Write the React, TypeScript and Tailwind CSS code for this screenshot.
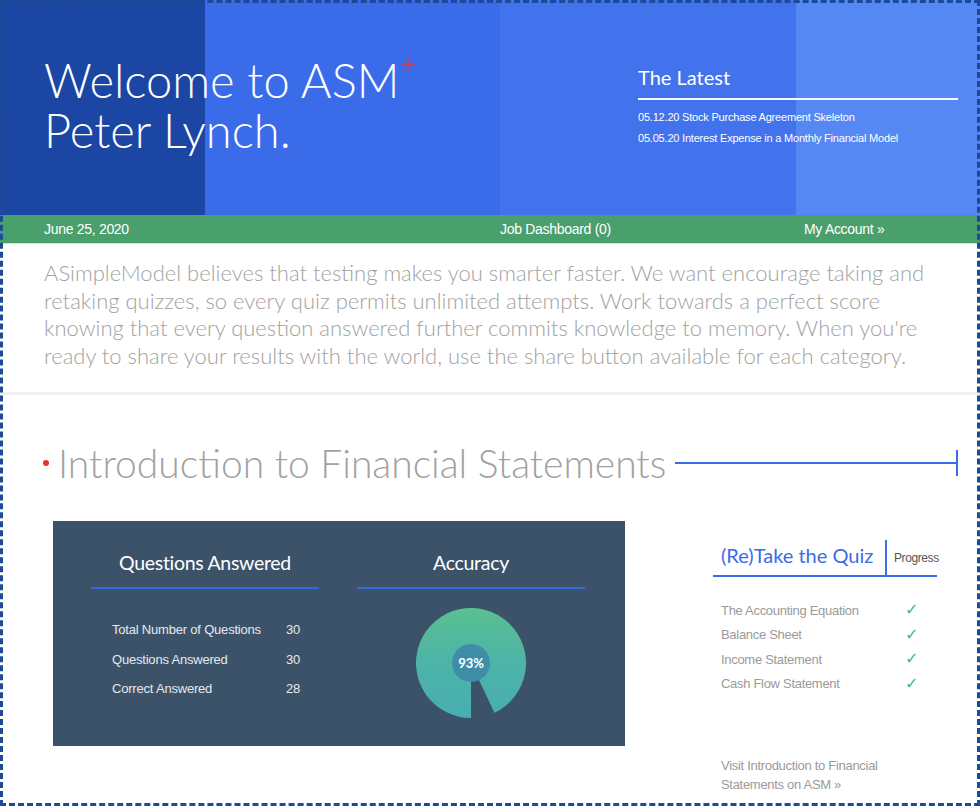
import React from "react";

const thin = "font-['Lato','Noto_Sans',sans-serif]";
const narrow = "font-['Liberation_Sans',Arial,sans-serif]";

const latest = [
  "05.12.20 Stock Purchase Agreement Skeleton",
  "05.05.20 Interest Expense in a Monthly Financial Model",
];

const stats = [
  { label: "Total Number of Questions", value: 30 },
  { label: "Questions Answered", value: 30 },
  { label: "Correct Answered", value: 28 },
];

const modules = ["The Accounting Equation", "Balance Sheet", "Income Statement", "Cash Flow Statement"];

function AccuracyDonut({ pct }: { pct: number }) {
  // arc starts at 6 o'clock and runs clockwise
  const r = 55;
  const c = 55;
  const start = Math.PI;
  const end = start + (pct / 100) * Math.PI * 2;
  const sx = c + r * Math.sin(start);
  const sy = c - r * Math.cos(start);
  const ex = c + r * Math.sin(end);
  const ey = c - r * Math.cos(end);
  const large = pct > 50 ? 1 : 0;
  return (
    <svg width="110" height="110" viewBox="0 0 110 110">
      <defs>
        <linearGradient id="acc" x1="0" y1="0" x2="0" y2="1">
          <stop offset="0" stopColor="#59c08f" />
          <stop offset="0.45" stopColor="#4db5a6" />
          <stop offset="1" stopColor="#47adb4" />
        </linearGradient>
      </defs>
      <path d={`M${c} ${c} L${sx} ${sy} A${r} ${r} 0 ${large} 1 ${ex} ${ey} Z`} fill="url(#acc)" />
      <circle cx={c} cy={c} r="19" fill="#3f8ea9" />
      <text
        x={c}
        y={c + 4.5}
        textAnchor="middle"
        fill="#ffffff"
        fontSize="13"
        fontWeight="700"
        fontFamily="Lato, sans-serif"
      >
        {pct}%
      </text>
    </svg>
  );
}

export default function App() {
  return (
    <div className="relative h-[806px] w-[980px] overflow-hidden bg-white">
      {/* header */}
      <header className="flex h-[215px] bg-[linear-gradient(90deg,#1c46a3_0px,#1c46a3_205px,#3a6be8_205px,#3a6be8_500px,#4273ec_500px,#4273ec_796px,#5688f3_796px)] text-white">
        <div className="w-[638px] shrink-0 pl-[44px] pt-[55px]">
          <h1 className={`${thin} text-[47px] font-light leading-[50px]`}>
            <span className="block">
              Welcome to ASM
              <svg className="relative -top-[22px] ml-[3px] inline-block" width="14" height="14" viewBox="0 0 14 14">
                <path d="M7 0V14M0 7H14" stroke="#d8404c" strokeWidth="1.6" />
              </svg>
            </span>
            <span className="block">Peter Lynch.</span>
          </h1>
        </div>
        <div className="w-[320px] pt-[65px]">
          <h2 className={`${thin} text-[20px] leading-[24px] font-normal`}>The Latest</h2>
          <div className="mt-[9px] h-[2px] bg-white" />
          <ul className={`${narrow} mt-[7px] text-[11px] leading-[21px] tracking-[-0.2px]`}>
            {latest.map((item) => (
              <li key={item}>{item}</li>
            ))}
          </ul>
        </div>
      </header>

      {/* status bar */}
      <nav
        className={`${narrow} grid h-[29px] grid-cols-[456px_304px_1fr] items-center border-b border-[#cfe7d8] bg-[#4aa06d] pl-[44px] text-[14px] tracking-[-0.3px] text-white`}
      >
        <span>June 25, 2020</span>
        <span>Job Dashboard (0)</span>
        <span>My Account »</span>
      </nav>

      <p className={`${thin} pl-[44px] pr-[36px] pt-[15px] text-[22px] font-light leading-[27.5px] text-[#a2a2a2]`}>
        ASimpleModel believes that testing makes you smarter faster. We want encourage taking and retaking quizzes, so
        every quiz permits unlimited attempts. Work towards a perfect score knowing that every question answered further
        commits knowledge to memory. When you're ready to share your results with the world, use the share button
        available for each category.
      </p>

      <div className="mt-[23px] h-[3px] bg-[#efefef]" />

      {/* section title */}
      <div className="mt-[46px] flex items-center pl-[43px] pr-[22px]">
        <span className="mr-[9px] h-[6px] w-[6px] rounded-full bg-[#e8322f]" />
        <h2 className={`${thin} text-[39px] font-light leading-[44px] text-[#a0a2a3]`}>
          Introduction to Financial Statements
        </h2>
        <div className="ml-[9px] flex flex-1 items-center">
          <div className="h-[2px] flex-1 bg-[#3a6be8]" />
          <div className="h-[26px] w-[2px] bg-[#3a6be8]" />
        </div>
      </div>

      <div className="mt-[36px] flex pl-[53px]">
        {/* results card */}
        <section className="flex h-[225px] w-[572px] shrink-0 gap-[38px] bg-[#3c5269] pl-[38px] pt-[30px]">
          <div className="w-[228px]">
            <h3 className={`${thin} text-center text-[19.5px] leading-[24px] font-normal tracking-[-0.3px] text-white`}>
              Questions Answered
            </h3>
            <div className="mt-[12px] h-[2px] bg-[#3468e0]" />
            <dl className={`${narrow} mt-[26px] pl-[21px] text-[13px] tracking-[-0.2px] text-[#e4e9ef]`}>
              {stats.map((s) => (
                <div key={s.label} className="flex h-[29.5px] items-center">
                  <dt className="w-[174px]">{s.label}</dt>
                  <dd>{s.value}</dd>
                </div>
              ))}
            </dl>
          </div>
          <div className="w-[228px]">
            <h3 className={`${thin} text-center text-[19.5px] leading-[24px] font-normal tracking-[-0.3px] text-white`}>
              Accuracy
            </h3>
            <div className="mt-[12px] h-[2px] bg-[#3468e0]" />
            <div className="mt-[19px] flex justify-center">
              <AccuracyDonut pct={93} />
            </div>
          </div>
        </section>

        {/* quiz progress */}
        <aside className="ml-[88px] w-[224px] shrink-0 pt-[19px]">
          <div className="flex items-end border-b-2 border-[#3a6be8]">
            <h3 className={`${thin} w-[172px] shrink-0 pb-[8px] pl-[8px] text-[20px] leading-[24px] text-[#3a6be8]`}>
              (Re)Take the Quiz
            </h3>
            <div className="flex h-[35px] items-center border-l-2 border-[#3a6be8] pl-[7px]">
              <span className={`${narrow} whitespace-nowrap text-[12px] tracking-[-0.4px] text-[#555555]`}>Progress</span>
            </div>
          </div>
          <ul className={`${narrow} mt-[21px] pl-[8px] text-[13px] tracking-[-0.3px] text-[#9a9a9a]`}>
            {modules.map((m) => (
              <li key={m} className="flex h-[24.5px] items-center">
                <span className="w-[184px]">{m}</span>
                <span className="font-['DejaVu_Sans',sans-serif] text-[16px] text-[#3cb984]">✓</span>
              </li>
            ))}
          </ul>
          <a className={`${narrow} mt-[60px] block pl-[8px] text-[13px] leading-[19px] tracking-[-0.3px] text-[#9a9a9a]`}>
            Visit Introduction to Financial
            <br />
            Statements on ASM »
          </a>
        </aside>
      </div>

      {/* dashed frame */}
      <div className="pointer-events-none absolute inset-0 border-[3px] border-dashed border-[#1d4a98]" />
    </div>
  );
}
